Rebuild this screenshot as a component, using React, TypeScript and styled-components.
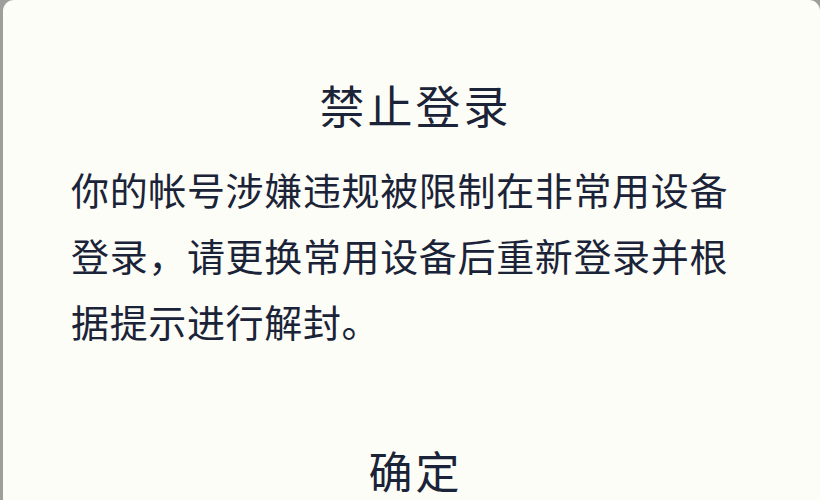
import React from 'react';
import styled, { createGlobalStyle } from 'styled-components';

const GlobalStyle = createGlobalStyle`
  html, body {
    margin: 0;
    padding: 0;
    background: #9d9f9b;
    overflow: hidden;
  }
  body {
    font-family: 'Noto Sans CJK SC', 'Noto Sans', sans-serif;
  }
`;

const Backdrop = styled.div`
  width: 820px;
  height: 500px;
  padding: 0 0 0 3px;
  box-sizing: border-box;
  overflow: hidden;
`;

const Dialog = styled.section`
  background: #fcfdf6;
  border-radius: 11px 11px 0 0;
  height: 560px;
  display: flex;
  flex-direction: column;
  color: #1b2338;
`;

const Title = styled.h1`
  margin: 75px 0 0;
  padding-left: 8px;
  font-size: 45px;
  font-weight: 400;
  line-height: 60px;
  text-align: center;
  letter-spacing: 3px;
`;

const Message = styled.p`
  margin: 21px 0 0;
  padding: 0 60px 0 68px;
  font-size: 38px;
  line-height: 66px;
  letter-spacing: 0.65px;
`;

const ConfirmButton = styled.button`
  margin: 86px auto 0;
  border: none;
  background: none;
  padding: 0 0 0 8px;
  font-family: inherit;
  font-size: 44px;
  line-height: 60px;
  color: #1b2338;
  letter-spacing: 3px;
`;

export default function App() {
  return (
    <>
      <GlobalStyle />
      <Backdrop>
        <Dialog>
          <Title>禁止登录</Title>
          <Message>
            你的帐号涉嫌违规被限制在非常用设备登录，请更换常用设备后重新登录并根据提示进行解封。
          </Message>
          <ConfirmButton>确定</ConfirmButton>
        </Dialog>
      </Backdrop>
    </>
  );
}
